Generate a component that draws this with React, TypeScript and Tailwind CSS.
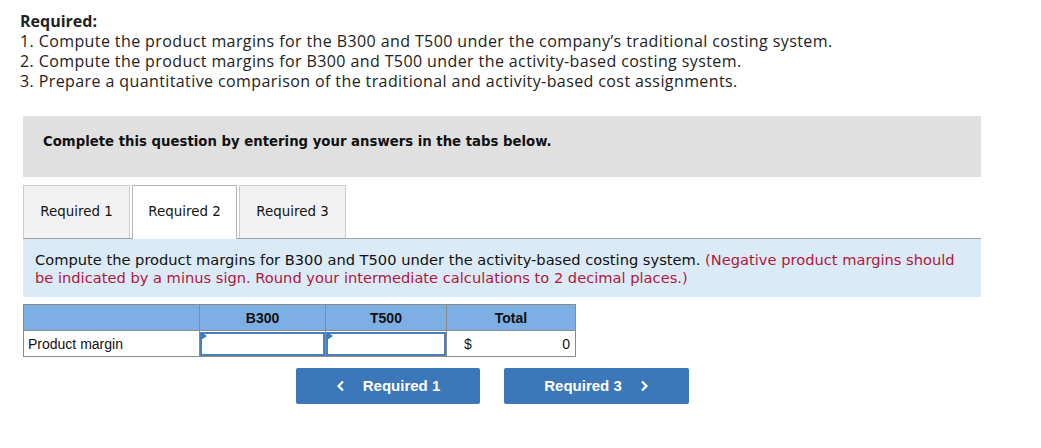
import React from "react";

const tabs = ["Required 1", "Required 2", "Required 3"];

const App: React.FC = () => {
  return (
    <div className="w-[1041px] h-[448px] bg-white text-black">
      <div className="pl-[20px] pt-[11px] font-['Open_Sans',sans-serif] text-[16px] tracking-[0.4px] leading-[20px] text-[#222]">
        <p className="font-bold tracking-normal">Required:</p>
        <p>1. Compute the product margins for the B300 and T500 under the company’s traditional costing system.</p>
        <p>2. Compute the product margins for B300 and T500 under the activity-based costing system.</p>
        <p>3. Prepare a quantitative comparison of the traditional and activity-based cost assignments.</p>
      </div>

      <div className="ml-[23px] mt-[25px] w-[958px] h-[61px] bg-[#e0e0e0] flex items-center pl-[20px] pb-[10px]">
        <span className="font-['DejaVu_Sans_Condensed','DejaVu_Sans',sans-serif] font-bold text-[14.75px] text-[#111]">
          Complete this question by entering your answers in the tabs below.
        </span>
      </div>

      <div className="ml-[23px] mt-[8px] w-[958px] flex items-end border-b border-[#a0a0a0] h-[54px] gap-[2px]">
        {tabs.map((t, i) => (
          <div
            key={t}
            className={
              i === 1
                ? "h-[54px] w-[105px] -mb-px bg-white border border-b-0 border-[#b5b5b5] flex items-center justify-center font-['DejaVu_Sans',sans-serif] text-[13.4px] text-[#111]"
                : "h-[53px] w-[107px] bg-[#f2f2f2] border border-b-0 border-[#cccccc] flex items-center justify-center pt-[1px] font-['DejaVu_Sans',sans-serif] text-[13.4px] text-[#111]"
            }
          >
            {t}
          </div>
        ))}
      </div>

      <div className="ml-[23px] w-[958px] h-[58px] bg-[#dbeaf7] pl-[12px] pr-[16px] pt-[12px] font-['DejaVu_Sans',sans-serif] text-[14.65px] leading-[18px] text-[#111]">
        <p>
          Compute the product margins for B300 and T500 under the activity-based costing system.{" "}
          <span className="text-[#b1173b]">(Negative product margins should</span>
        </p>
        <p className="text-[#b1173b]">
          be indicated by a minus sign. Round your intermediate calculations to 2 decimal places.)
        </p>
      </div>

      <table className="ml-[23px] mt-[7px] border-collapse font-['Liberation_Sans',Arial,sans-serif] text-[14px] text-[#111]">
        <thead>
          <tr className="h-[26px] bg-[#7dafe4]">
            <th className="w-[176px] border border-[#8a8a8a]"></th>
            <th className="w-[126px] border border-[#8a8a8a] font-bold pt-[1px]">B300</th>
            <th className="w-[121px] border border-[#8a8a8a] font-bold pt-[1px]">T500</th>
            <th className="w-[129px] border border-[#8a8a8a] font-bold pt-[1px]">Total</th>
          </tr>
        </thead>
        <tbody>
          <tr className="h-[26px]">
            <td className="border border-[#8a8a8a] pl-[4px] pt-[1px]">Product margin</td>
            <td className="border border-[#8a8a8a] p-0 relative">
              <div className="h-[24px] border-2 border-[#4a7fbf] bg-white"></div>
              <span className="absolute left-[1px] top-[1px] w-0 h-0 border-t-[4px] border-b-[4px] border-l-[6px] border-t-transparent border-b-transparent border-l-[#3b78c2]"></span>
            </td>
            <td className="border border-[#8a8a8a] p-0 relative">
              <div className="h-[24px] border-2 border-[#4a7fbf] bg-white"></div>
              <span className="absolute left-[1px] top-[1px] w-0 h-0 border-t-[4px] border-b-[4px] border-l-[6px] border-t-transparent border-b-transparent border-l-[#3b78c2]"></span>
            </td>
            <td className="border border-[#8a8a8a] px-[5px] pt-[1px]">
              <div className="flex justify-between">
                <span className="pl-[12px]">$</span>
                <span>0</span>
              </div>
            </td>
          </tr>
        </tbody>
      </table>

      <div className="mt-[11px] ml-[296px] flex gap-[24px] font-['Liberation_Sans',Arial,sans-serif] text-[15px] font-bold text-white">
        <button className="w-[184px] h-[36px] rounded-[2px] bg-[#3b77b9] flex items-center justify-center gap-[18px]">
          <svg width="9" height="12" viewBox="0 0 9 12" fill="none">
            <path d="M7 1.5 L2.5 6 L7 10.5" stroke="white" strokeWidth="2.2" />
          </svg>
          <span>Required 1</span>
        </button>
        <button className="w-[185px] h-[36px] rounded-[2px] bg-[#3b77b9] flex items-center justify-center gap-[18px]">
          <span>Required 3</span>
          <svg width="9" height="12" viewBox="0 0 9 12" fill="none">
            <path d="M2 1.5 L6.5 6 L2 10.5" stroke="white" strokeWidth="2.2" />
          </svg>
        </button>
      </div>
    </div>
  );
};

export default App;
